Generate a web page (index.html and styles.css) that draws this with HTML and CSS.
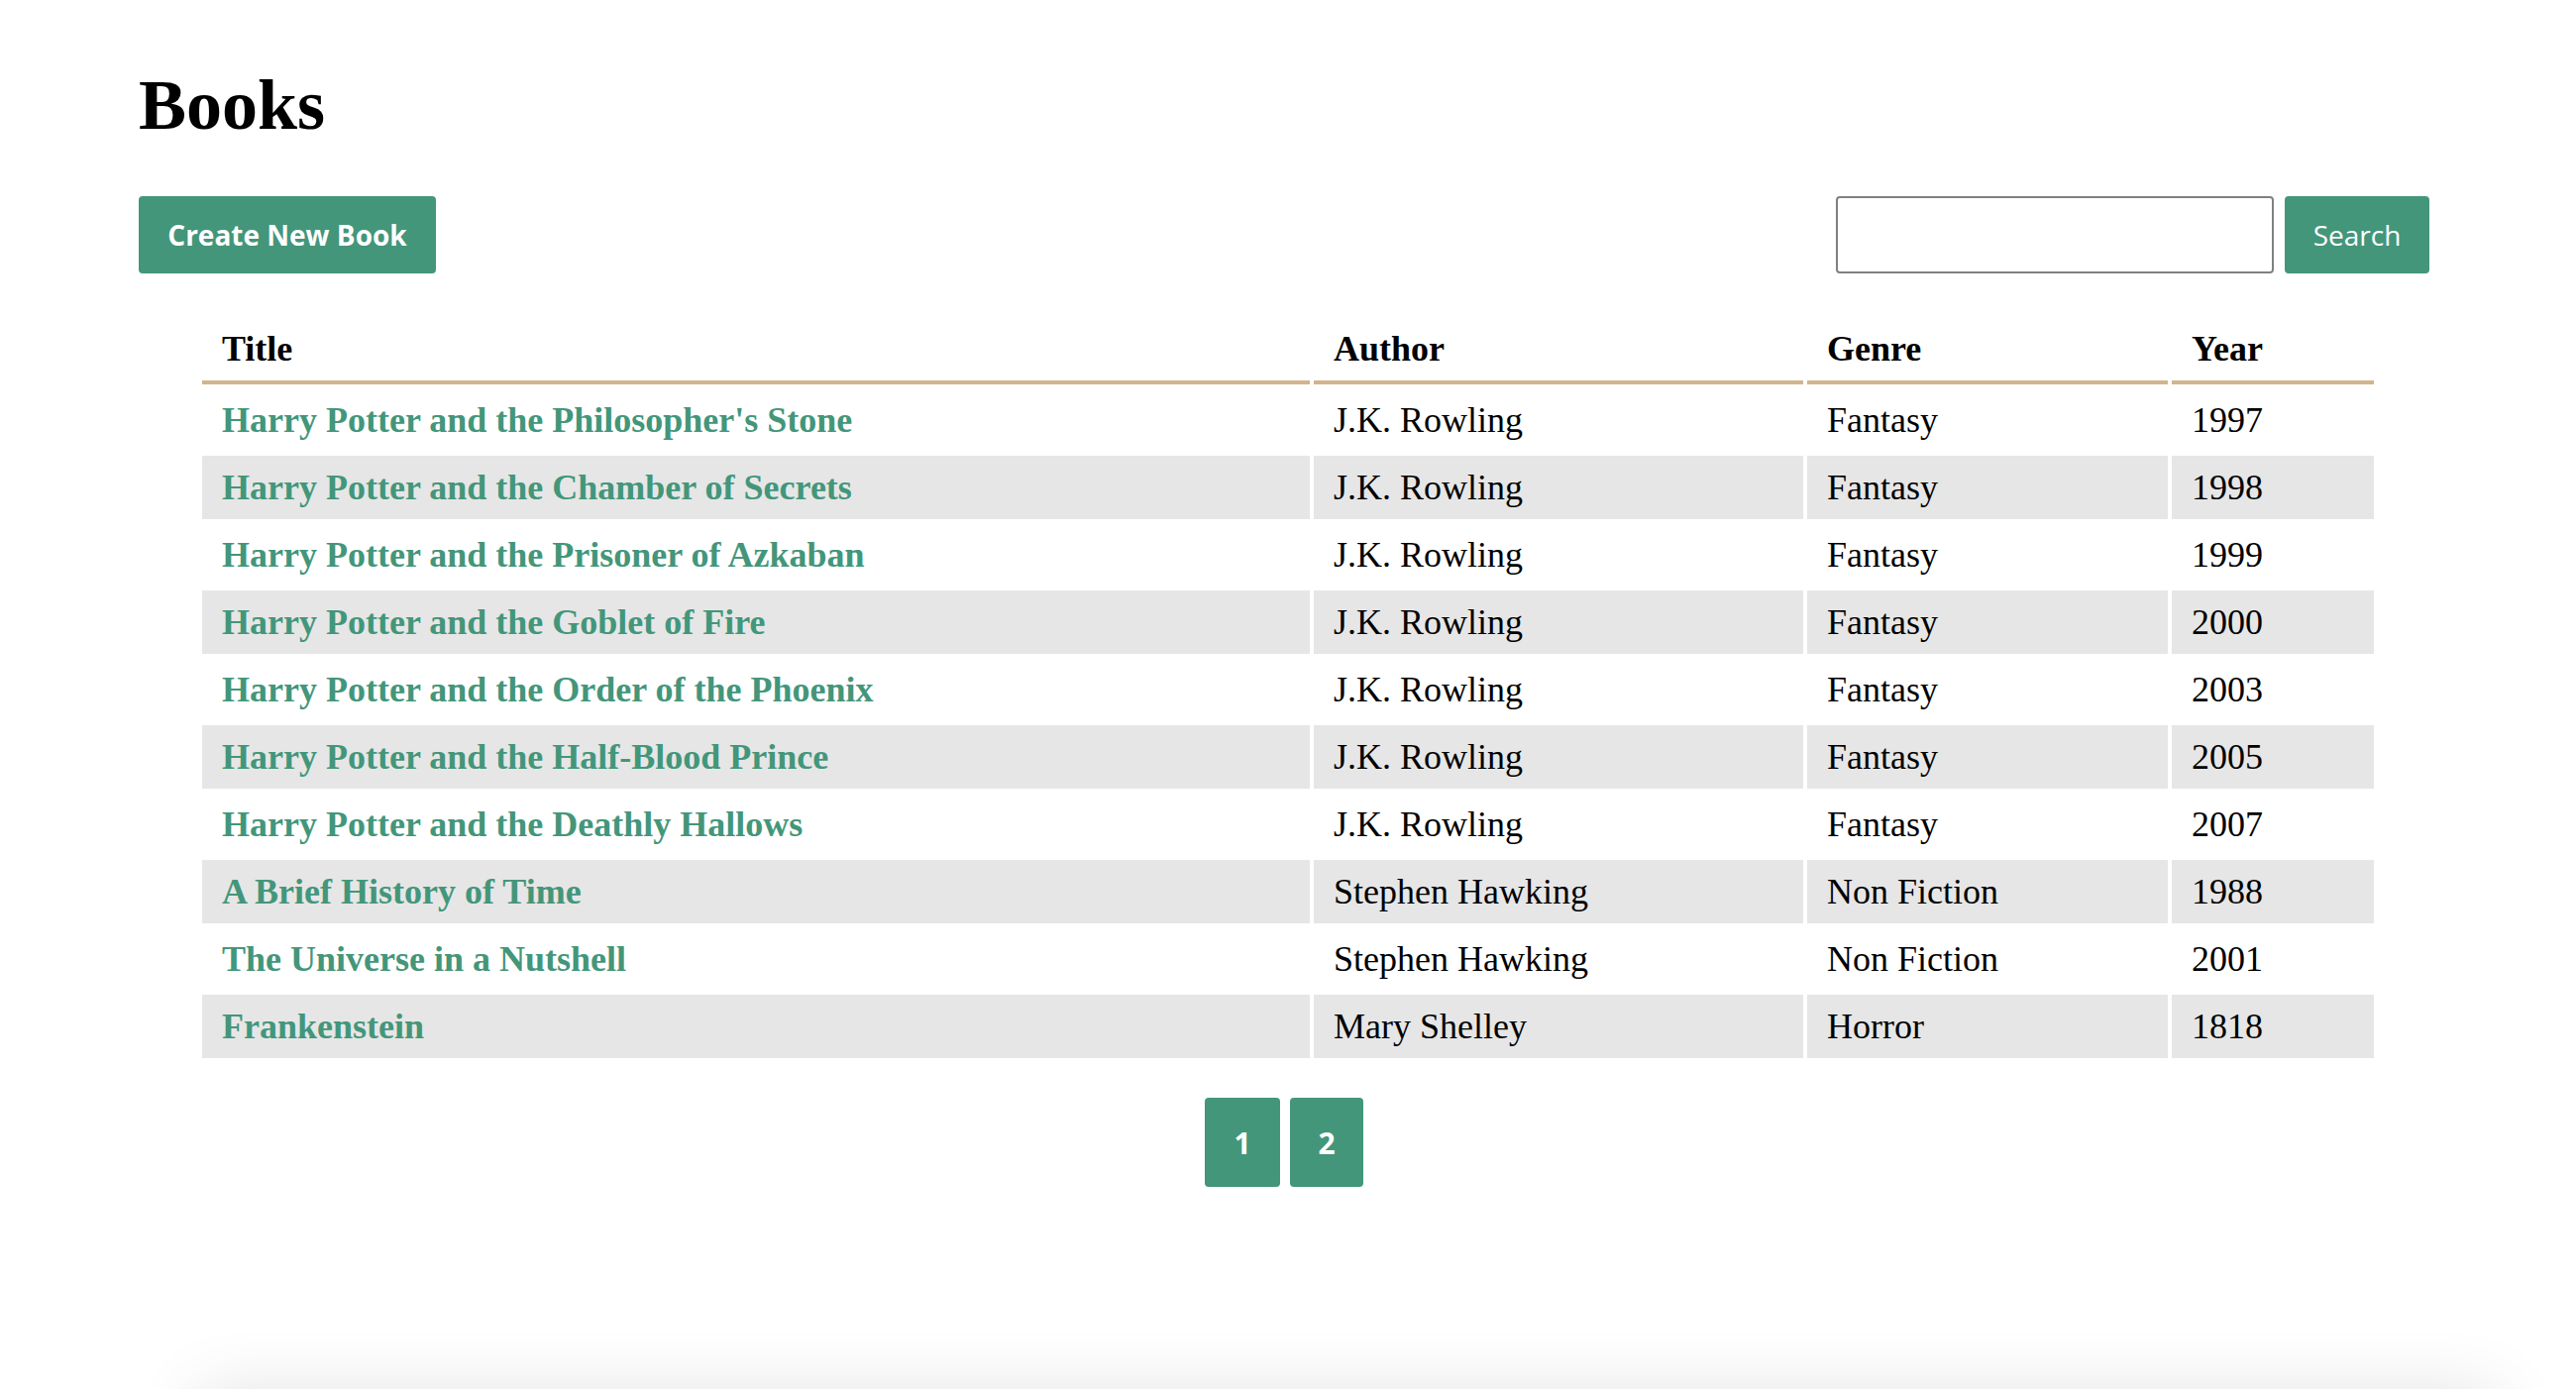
FILE: index.html
```html
<!DOCTYPE html>
<html lang="en">
<head>
<meta charset="utf-8">
<title>Books</title>
<link rel="stylesheet" href="styles.css">
</head>
<body>
<main class="page">
  <h1 class="page-title">Books</h1>
  <div class="toolbar">
    <button class="btn btn-create">Create New Book</button>
    <form class="search">
      <input class="search-input" type="text">
      <button class="btn btn-search" type="button">Search</button>
    </form>
  </div>
  <table class="books">
    <thead>
      <tr>
        <th class="col-title">Title</th>
        <th class="col-author">Author</th>
        <th class="col-genre">Genre</th>
        <th class="col-year">Year</th>
      </tr>
    </thead>
    <tbody>
      <tr><td><a href="#">Harry Potter and the Philosopher's Stone</a></td><td>J.K. Rowling</td><td>Fantasy</td><td>1997</td></tr>
      <tr><td><a href="#">Harry Potter and the Chamber of Secrets</a></td><td>J.K. Rowling</td><td>Fantasy</td><td>1998</td></tr>
      <tr><td><a href="#">Harry Potter and the Prisoner of Azkaban</a></td><td>J.K. Rowling</td><td>Fantasy</td><td>1999</td></tr>
      <tr><td><a href="#">Harry Potter and the Goblet of Fire</a></td><td>J.K. Rowling</td><td>Fantasy</td><td>2000</td></tr>
      <tr><td><a href="#">Harry Potter and the Order of the Phoenix</a></td><td>J.K. Rowling</td><td>Fantasy</td><td>2003</td></tr>
      <tr><td><a href="#">Harry Potter and the Half-Blood Prince</a></td><td>J.K. Rowling</td><td>Fantasy</td><td>2005</td></tr>
      <tr><td><a href="#">Harry Potter and the Deathly Hallows</a></td><td>J.K. Rowling</td><td>Fantasy</td><td>2007</td></tr>
      <tr><td><a href="#">A Brief History of Time</a></td><td>Stephen Hawking</td><td>Non Fiction</td><td>1988</td></tr>
      <tr><td><a href="#">The Universe in a Nutshell</a></td><td>Stephen Hawking</td><td>Non Fiction</td><td>2001</td></tr>
      <tr><td><a href="#">Frankenstein</a></td><td>Mary Shelley</td><td>Horror</td><td>1818</td></tr>
    </tbody>
  </table>
  <nav class="pagination">
    <button class="btn page-btn page-btn-1">1</button>
    <button class="btn page-btn page-btn-2">2</button>
  </nav>
  <footer class="footer"></footer>
</main>
</body>
</html>
```

FILE: styles.css
```css
html, body {
  margin: 0;
  padding: 0;
  background: #ffffff;
}

body {
  font-family: "Liberation Serif", "Times New Roman", serif;
  color: #000;
}

.page {
  width: 2312px;
  padding: 64px 148px 0 140px;
}

.page-title {
  margin: 0;
  font-size: 72px;
  font-weight: bold;
  line-height: 84px;
}

.toolbar {
  margin-top: 50px;
  display: flex;
  justify-content: space-between;
  align-items: center;
}

.btn {
  border: none;
  background: #43967a;
  color: #fff;
  border-radius: 4px;
  font-family: "Open Sans", "DejaVu Sans", sans-serif;
  cursor: pointer;
}

.btn-create {
  width: 300px;
  height: 78px;
  font-size: 28px;
  font-weight: 700;
  padding: 0;
}

.search {
  display: flex;
  gap: 11px;
  margin: 0;
}

.search-input {
  box-sizing: border-box;
  width: 442px;
  height: 78px;
  border: 2px solid #808080;
  border-radius: 4px;
  padding: 0 12px;
  font-size: 28px;
}

.btn-search {
  width: 146px;
  height: 78px;
  font-size: 28px;
  font-weight: 400;
  padding: 0;
}

.books {
  margin: 40px 0 0 60px;
  width: 2200px;
  border-spacing: 4px;
  table-layout: fixed;
  font-size: 36px;
}

.books th,
.books td {
  text-align: left;
  padding: 11px 20px;
  line-height: 42px;
  vertical-align: middle;
}

.books th {
  font-weight: bold;
  border-bottom: 4px solid #d2b48c;
}

.col-title { width: 1078px; }
.col-author { width: 454px; }
.col-genre { width: 324px; }
.col-year { width: 164px; }

.books tbody tr:nth-child(even) td {
  background: #e6e6e6;
}

.books a {
  color: #43967a;
  font-weight: bold;
  text-decoration: none;
}

.pagination {
  margin-top: 36px;
  display: flex;
  justify-content: center;
  gap: 10px;
}

.page-btn {
  height: 90px;
  font-size: 30px;
  font-weight: 700;
  padding: 0;
}

.page-btn-1 { width: 76px; }
.page-btn-2 { width: 74px; }

.footer {
  margin: 208px -68px 0 60px;
  height: 120px;
  box-shadow: 0 0 70px rgba(0, 0, 0, 0.12);
}
```
